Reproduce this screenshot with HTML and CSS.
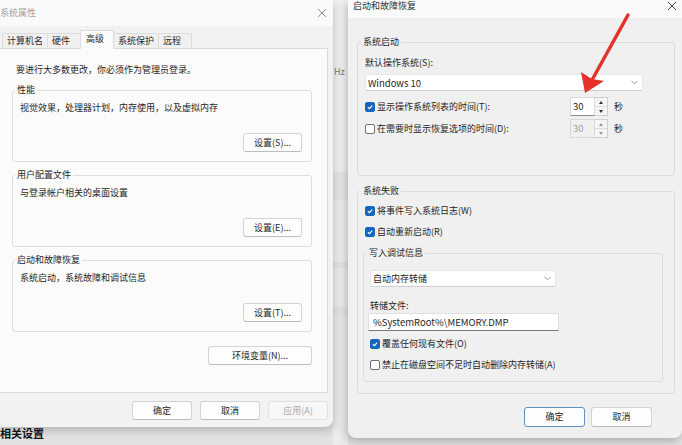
FILE: index.html
```html
<!DOCTYPE html>
<html>
<head>
    <meta charset="utf-8">
    <title>系统属性 - 启动和故障恢复</title>
    <link rel="stylesheet" href="styles.css">
</head>
<body>
<div class="desk">
    <div class="left-col">
        <div class="dialog sysprop">
            <div class="titlebar">
                <span class="title">系统属性</span>
                <svg class="xmark" viewBox="0 0 10 10"><path d="M1 1L9 9M9 1L1 9"/></svg>
            </div>
            <div class="tabs">
                <span class="tab">计算机名</span>
                <span class="tab">硬件</span>
                <span class="tab active">高级</span>
                <span class="tab">系统保护</span>
                <span class="tab">远程</span>
            </div>
            <div class="panel">
                <p class="note">要进行大多数更改，你必须作为管理员登录。</p>
                <fieldset class="box">
                    <legend>性能</legend>
                    <p class="desc">视觉效果，处理器计划，内存使用，以及虚拟内存</p>
                    <div class="box-actions"><button class="btn set">设置(S)...</button></div>
                </fieldset>
                <fieldset class="box">
                    <legend>用户配置文件</legend>
                    <p class="desc">与登录帐户相关的桌面设置</p>
                    <div class="box-actions"><button class="btn set">设置(E)...</button></div>
                </fieldset>
                <fieldset class="box">
                    <legend>启动和故障恢复</legend>
                    <p class="desc">系统启动，系统故障和调试信息</p>
                    <div class="box-actions"><button class="btn set">设置(T)...</button></div>
                </fieldset>
                <div class="env"><button class="btn wide">环境变量(N)...</button></div>
            </div>
            <div class="footer">
                <button class="btn">确定</button>
                <button class="btn">取消</button>
                <button class="btn" disabled>应用(A)</button>
            </div>
        </div>
        <div class="related">相关设置</div>
    </div>

    <div class="behind"><span class="hz">Hz</span></div>

    <div class="dialog startup">
        <div class="titlebar">
            <span class="title">启动和故障恢复</span>
            <svg class="xmark" viewBox="0 0 10 10"><path d="M1 1L9 9M9 1L1 9"/></svg>
        </div>

        <fieldset class="group first">
            <legend>系统启动</legend>
            <p class="field-label">默认操作系统(S):</p>
            <div class="select wide-select">
                <span>Windows 10</span>
                <svg class="chev" viewBox="0 0 8 5"><path d="M0.5 0.5L4 4L7.5 0.5"/></svg>
            </div>
            <div class="row">
                <span class="cb on"><svg viewBox="0 0 10 10"><path d="M2.3 5.2L4.2 7L7.8 3.2"/></svg></span>
                <span class="lbl">显示操作系统列表的时间(T):</span>
                <div class="spin">
                    <span class="spin-val">30</span>
                    <span class="spin-arrows"><span class="up"></span><span class="down"></span></span>
                </div>
                <span class="unit">秒</span>
            </div>
            <div class="row">
                <span class="cb"></span>
                <span class="lbl">在需要时显示恢复选项的时间(D):</span>
                <div class="spin off">
                    <span class="spin-val">30</span>
                    <span class="spin-arrows"><span class="up"></span><span class="down"></span></span>
                </div>
                <span class="unit">秒</span>
            </div>
        </fieldset>

        <fieldset class="group second">
            <legend>系统失败</legend>
            <div class="check c1">
                <span class="cb on"><svg viewBox="0 0 10 10"><path d="M2.3 5.2L4.2 7L7.8 3.2"/></svg></span>
                <span>将事件写入系统日志(W)</span>
            </div>
            <div class="check c2">
                <span class="cb on"><svg viewBox="0 0 10 10"><path d="M2.3 5.2L4.2 7L7.8 3.2"/></svg></span>
                <span>自动重新启动(R)</span>
            </div>
            <fieldset class="subgroup">
                <legend>写入调试信息</legend>
                <div class="select small-select">
                    <span>自动内存转储</span>
                    <svg class="chev" viewBox="0 0 8 5"><path d="M0.5 0.5L4 4L7.5 0.5"/></svg>
                </div>
                <p class="field-label dump">转储文件:</p>
                <div class="textbox">%SystemRoot%\MEMORY.DMP</div>
                <div class="check c3">
                    <span class="cb on"><svg viewBox="0 0 10 10"><path d="M2.3 5.2L4.2 7L7.8 3.2"/></svg></span>
                    <span>覆盖任何现有文件(O)</span>
                </div>
                <div class="check c4">
                    <span class="cb"></span>
                    <span>禁止在磁盘空间不足时自动删除内存转储(A)</span>
                </div>
            </fieldset>
        </fieldset>

        <div class="actions">
            <button class="btn dlg default">确定</button>
            <button class="btn dlg">取消</button>
        </div>
    </div>

    <!-- red annotation arrow -->
    <svg class="arrow" viewBox="0 0 682 445">
        <line x1="628" y1="15" x2="592" y2="80"/>
        <polygon points="585,93 581,72 592,79 604,81"/>
    </svg>
</div>
</body>
</html>
```

FILE: styles.css
```css
* {
    box-sizing: border-box;
}
body {
    margin: 0;
    font-family: "Noto Sans CJK SC", "Noto Sans", sans-serif;
    font-size: 9px;
    line-height: 12px;
    color: #262626;
}
p {
    margin: 0;
}

.desk {
    position: relative;
    display: flex;
    width: 682px;
    height: 445px;
    overflow: hidden;
    background: #e2e2e2;
}

/* ---- left window: 系统属性 ---- */
.left-col {
    width: 333px;
    flex: none;
    display: flex;
    flex-direction: column;
    position: relative;
    z-index: 2;
}
.dialog {
    display: flex;
    flex-direction: column;
}
.sysprop {
    height: 427px;
    flex: none;
    background: #f2f2f2;
    border-radius: 0 0 8px 0;
    box-shadow: 1px 3px 10px rgba(0,0,0,0.22);
}
.titlebar {
    display: flex;
    justify-content: space-between;
    flex: none;
    background: #fafafa;
}
.sysprop .titlebar {
    height: 26px;
    align-items: center;
    padding-right: 6px;
    color: #a3a3a3;
}
.xmark {
    width: 10px;
    height: 10px;
    stroke: #8a8a8a;
    stroke-width: 1;
    fill: none;
}
.tabs {
    display: flex;
    align-items: flex-end;
    height: 22px;
    padding-left: 2px;
    flex: none;
}
.tab {
    min-width: 34px;
    height: 15px;
    padding: 0 4px;
    line-height: 14px;
    border: 1px solid #dcdcdc;
    border-bottom: none;
    margin-right: -1px;
    background: #f0f0f0;
    color: #2a2a2a;
}
.tab.active {
    height: 19px;
    margin-bottom: -1px;
    padding: 0 5px;
    line-height: 16px;
    background: #fbfbfb;
    position: relative;
    z-index: 1;
}
.panel {
    height: 345px;
    flex: none;
    margin-right: 5px;
    padding-top: 15px;
    border: 1px solid #dadada;
    border-left: none;
    background: #fbfbfb;
}
.note {
    padding-left: 16px;
}
.box {
    margin: 8px 15px 0 12px;
    padding: 0 9px 9px 7px;
    border: 1px solid #dedede;
    border-radius: 3px;
    min-width: 0;
}
.box + .box {
    margin-top: 7px;
}
.box legend {
    padding: 0 2px;
    margin-left: -5px;
}
.desc {
    margin-top: 6px;
}
.box-actions {
    display: flex;
    justify-content: flex-end;
    margin-top: 19px;
}
.btn {
    width: 60px;
    height: 19px;
    padding: 0;
    font: inherit;
    line-height: 17px;
    color: #262626;
    background: #fdfdfd;
    border: 1px solid #d3d3d3;
    border-bottom-color: #bdbdbd;
    border-radius: 3px;
}
.btn:disabled {
    color: #a8a8a8;
    background: #f7f7f7;
    border-color: #e2e2e2;
}
.btn.set {
    width: 59px;
}
.btn.wide {
    width: 104px;
}
.env {
    display: flex;
    justify-content: flex-end;
    margin: 14px 15px 0 0;
}
.footer {
    display: flex;
    justify-content: flex-end;
    gap: 8px;
    padding: 8px 5px 0 0;
}
.related {
    font-size: 11px;
    font-weight: 700;
    line-height: 12px;
    color: #111;
}

/* ---- settings page peeking between the windows ---- */
.behind {
    width: 15px;
    flex: none;
    padding: 66px 0 0 1px;
    color: #7a7a7a;
    background: linear-gradient(#f3f3f3 0 172px, #e9e9e9 172px 200px, #f0f0f0 200px 262px,
        #e7e7e7 262px 268px, #efefef 268px 306px, #e7e7e7 306px 316px, #ececec 316px);
}

/* ---- right window: 启动和故障恢复 ---- */
.startup {
    width: 334px;
    height: 438px;
    flex: none;
    background: #f0f0f0;
    border-radius: 0 0 8px 8px;
    box-shadow: -2px 3px 10px rgba(0,0,0,0.25);
    position: relative;
    z-index: 2;
}
.startup .titlebar {
    height: 18px;
    padding: 0 5px;
    color: #303030;
}
.startup .xmark {
    margin-top: 1px;
    stroke: #444;
}
.group {
    margin: 0 7px 0 9px;
    padding: 0 7px 37px;
    border: 1px solid #dcdcdc;
    border-radius: 3px;
    min-width: 0;
}
.group legend {
    padding: 0 2px;
    margin-left: -4px;
}
.group.first {
    margin-top: 18px;
}
.group.second {
    margin-top: 9px;
    padding-bottom: 11px;
}
.field-label {
    margin-top: 9px;
}
.select {
    display: flex;
    align-items: center;
    justify-content: space-between;
    height: 17px;
    padding: 0 4px 0 2px;
    background: #fff;
    border: 1px solid #e6e6e6;
    border-bottom-color: #cfcfcf;
    border-radius: 2px;
}
.wide-select {
    width: 278px;
    margin-top: 5px;
    font-size: 9.5px;
}
.small-select {
    width: 186px;
    margin-top: 11px;
}
.chev {
    width: 7px;
    height: 5px;
    stroke: #8a8a8a;
    fill: none;
}
.row {
    display: flex;
    align-items: center;
    width: 258px;
    height: 19px;
    margin-top: 6px;
}
.row + .row {
    margin-top: 3px;
}
.row .lbl {
    flex: 1;
}
.cb {
    width: 10px;
    height: 10px;
    flex: none;
    margin-right: 2px;
    border: 1px solid #707070;
    border-radius: 2px;
    background: #fff;
}
.cb svg {
    display: block;
    width: 8px;
    height: 8px;
    stroke: #fff;
    stroke-width: 1.4;
    fill: none;
}
.cb.on {
    background: #1366c2;
    border-color: #1366c2;
}
.spin {
    display: flex;
    height: 19px;
}
.spin-val {
    width: 25px;
    padding-left: 2px;
    line-height: 17px;
    font-size: 9.5px;
    background: #fff;
    border: 1px solid #d9d9d9;
    border-bottom-color: #8c8c8c;
}
.spin-arrows {
    width: 13px;
    display: flex;
    flex-direction: column;
    background: #f5f5f5;
    border: 1px solid #cfcfcf;
    border-left: none;
}
.spin-arrows span {
    flex: 1;
    display: flex;
    align-items: center;
    justify-content: center;
}
.spin-arrows .up {
    border-bottom: 1px solid #dcdcdc;
}
.spin-arrows .up::before {
    content: "";
    border-left: 2.5px solid transparent;
    border-right: 2.5px solid transparent;
    border-bottom: 3px solid #333;
}
.spin-arrows .down::before {
    content: "";
    border-left: 2.5px solid transparent;
    border-right: 2.5px solid transparent;
    border-top: 3px solid #333;
}
.spin.off .spin-val {
    color: #a0a0a0;
    background: #f0f0f0;
    border-color: #d8d8d8;
}
.spin.off .up::before {
    border-bottom-color: #999;
}
.spin.off .down::before {
    border-top-color: #999;
}
.unit {
    width: 9px;
    margin-left: 6px;
}
.check {
    display: flex;
    align-items: center;
    height: 12px;
    margin-top: 8px;
}
.check.c2, .check.c4 {
    margin-top: 9px;
}
.check.c3 {
    margin-top: 7px;
}
.subgroup {
    margin: 9px 4px 0 -2px;
    padding: 0 6px 10px;
    border: 1px solid #dcdcdc;
    border-radius: 3px;
    min-width: 0;
}
.subgroup legend {
    padding: 0 2px;
    margin-left: -3px;
}
.field-label.dump {
    margin-top: 13px;
}
.textbox {
    width: 191px;
    height: 18px;
    margin: 1px 0 0 -2px;
    padding-left: 4px;
    line-height: 16px;
    font-size: 9.5px;
    background: #fff;
    border: 1px solid #e0e0e0;
    border-bottom-color: #7a7a7a;
}
.actions {
    display: flex;
    justify-content: flex-end;
    gap: 6px;
    margin-top: 13px;
    padding-right: 30px;
}
.btn.dlg {
    width: 61px;
    height: 20px;
    line-height: 18px;
}
.btn.default {
    border-color: #5d93c0;
}

.arrow {
    position: absolute;
    left: 0;
    top: 0;
    width: 682px;
    height: 445px;
    z-index: 5;
    pointer-events: none;
}
.arrow line {
    stroke: #e5322b;
    stroke-width: 3.5;
    stroke-linecap: round;
}
.arrow polygon {
    fill: #e5322b;
}
```
